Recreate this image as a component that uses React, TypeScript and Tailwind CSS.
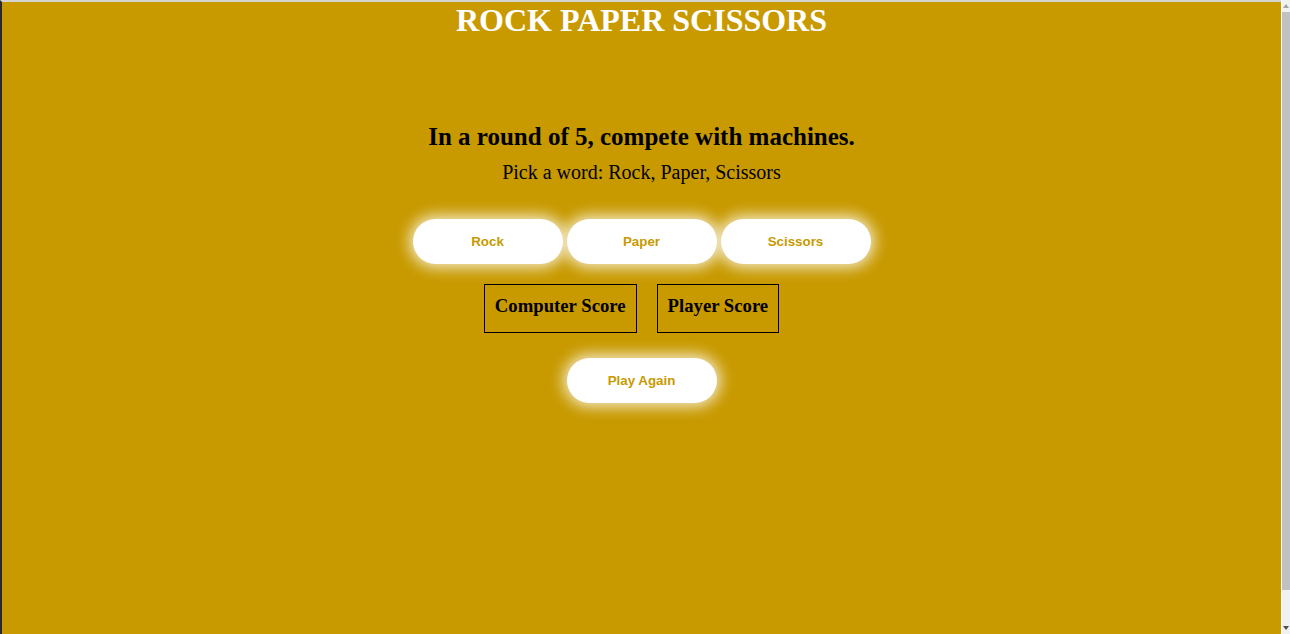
import React from 'react';

const serif = { fontFamily: '"Liberation Serif", "Times New Roman", serif' };

function PillButton({ label }: { label: string }) {
  return (
    <button
      className="h-[45px] w-[150px] rounded-full bg-white text-[13.33px] font-bold text-[#c89a00] shadow-[0_0_14px_4px_rgba(255,255,255,0.75)]"
      style={{ fontFamily: '"Liberation Sans", Arial, sans-serif' }}
    >
      {label}
    </button>
  );
}

function ScoreBox({ label }: { label: string }) {
  return (
    <div className="mr-[20px] flex h-[49px] items-center border border-black px-[10px] pb-[5px]">
      <h3 className="text-[18.72px] font-bold leading-none text-black">{label}</h3>
    </div>
  );
}

export default function App() {
  return (
    <div className="flex h-[634px] w-full overflow-hidden bg-white" style={serif}>
      <div className="flex flex-1 flex-col border-l-2 border-t-2 border-l-[#2a2a2a] border-t-[#d4d4d4] bg-[#c89a00]">
        <h1 className="text-center text-[32px] font-bold leading-[37px] text-white">ROCK PAPER SCISSORS</h1>

        <div className="mt-[83px] flex flex-col items-center">
          <h2 className="text-[25px] font-bold leading-[29px] text-black">In a round of 5, compete with machines.</h2>
          <p className="mt-[10px] text-[20px] leading-[23px] text-black">Pick a word: Rock, Paper, Scissors</p>

          <div className="mt-[35px] flex gap-[4px]">
            <PillButton label="Rock" />
            <PillButton label="Paper" />
            <PillButton label="Scissors" />
          </div>

          <div className="mt-[20px] flex">
            <ScoreBox label="Computer Score" />
            <ScoreBox label="Player Score" />
          </div>

          <div className="mt-[25px]">
            <PillButton label="Play Again" />
          </div>
        </div>
      </div>

      {/* fake scrollbar */}
      <div className="ml-[1px] flex w-[8px] flex-col bg-[#f1f1f1]">
        <div className="flex h-[12px] items-center justify-center">
          <svg width="6" height="4" viewBox="0 0 6 4"><path d="M3 0 L6 4 L0 4 Z" fill="#a3a3a3" /></svg>
        </div>
        <div className="h-[578px] bg-[#c1c1c1]" />
        <div className="flex-1" />
        <div className="flex h-[12px] items-center justify-center">
          <svg width="6" height="4" viewBox="0 0 6 4"><path d="M0 0 L6 0 L3 4 Z" fill="#505050" /></svg>
        </div>
      </div>
    </div>
  );
}
